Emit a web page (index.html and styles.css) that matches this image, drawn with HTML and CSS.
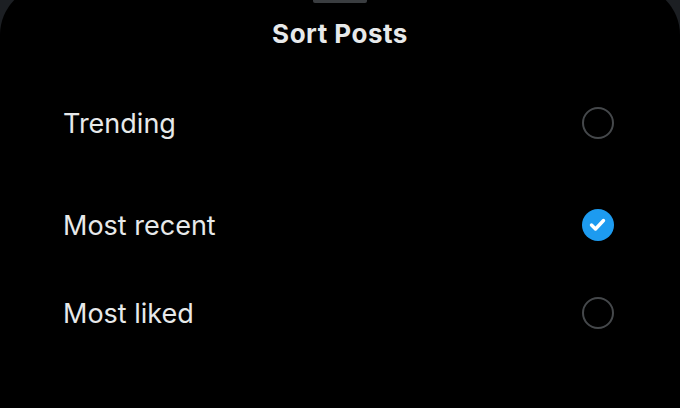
FILE: index.html
```html
<!DOCTYPE html>
<html lang="en">
<head>
<meta charset="utf-8">
<title>Sort Posts</title>
<link rel="stylesheet" href="styles.css">
</head>
<body>
  <div class="sheet">
    <div class="handle"></div>
    <h1 class="title">Sort Posts</h1>
    <ul class="options">
      <li class="option option--lead">
        <span class="label">Trending</span>
        <span class="radio"></span>
      </li>
      <li class="option">
        <span class="label">Most recent</span>
        <span class="radio radio--checked">
          <svg viewBox="0 0 32 32" width="32" height="32" aria-hidden="true">
            <polyline points="9.5,16 13.5,20 21.5,11.5" fill="none" stroke="#fff" stroke-width="3.4" stroke-linecap="round" stroke-linejoin="round"/>
          </svg>
        </span>
      </li>
      <li class="option">
        <span class="label">Most liked</span>
        <span class="radio"></span>
      </li>
    </ul>
  </div>
</body>
</html>
```

FILE: styles.css
```css
html, body {
  margin: 0;
  padding: 0;
  background: #1c1f23;
  width: 680px;
  height: 408px;
  overflow: hidden;
}

.sheet {
  margin-top: -15px;
  height: 440px;
  background: #000;
  border-radius: 50px 50px 0 0;
  padding-top: 15px;
  box-sizing: border-box;
  display: flex;
  flex-direction: column;
  align-items: stretch;
  font-family: "Inter", "Roboto", sans-serif;
  color: #e7e9ea;
}

.handle {
  align-self: center;
  width: 54px;
  height: 3px;
  border-radius: 0 0 2px 2px;
  background: #3a3d40;
}

.title {
  margin: 16px 0 0;
  text-align: center;
  font-size: 26px;
  line-height: 30px;
  font-weight: 700;
  letter-spacing: 0.5px;
}

.options {
  list-style: none;
  margin: 30px 0 0;
  padding: 0 66px 0 63px;
  display: flex;
  flex-direction: column;
}

.option {
  height: 88px;
  display: flex;
  align-items: center;
  justify-content: space-between;
}

.option--lead {
  margin-bottom: 14px;
}

.label {
  font-size: 27px;
  font-weight: 400;
}

.radio {
  width: 32px;
  height: 32px;
  box-sizing: border-box;
  border-radius: 50%;
  border: 2.5px solid #45484b;
  display: flex;
  align-items: center;
  justify-content: center;
}

.radio--checked {
  border: none;
  background: #1d9bf0;
}

.radio svg {
  display: block;
}
```
